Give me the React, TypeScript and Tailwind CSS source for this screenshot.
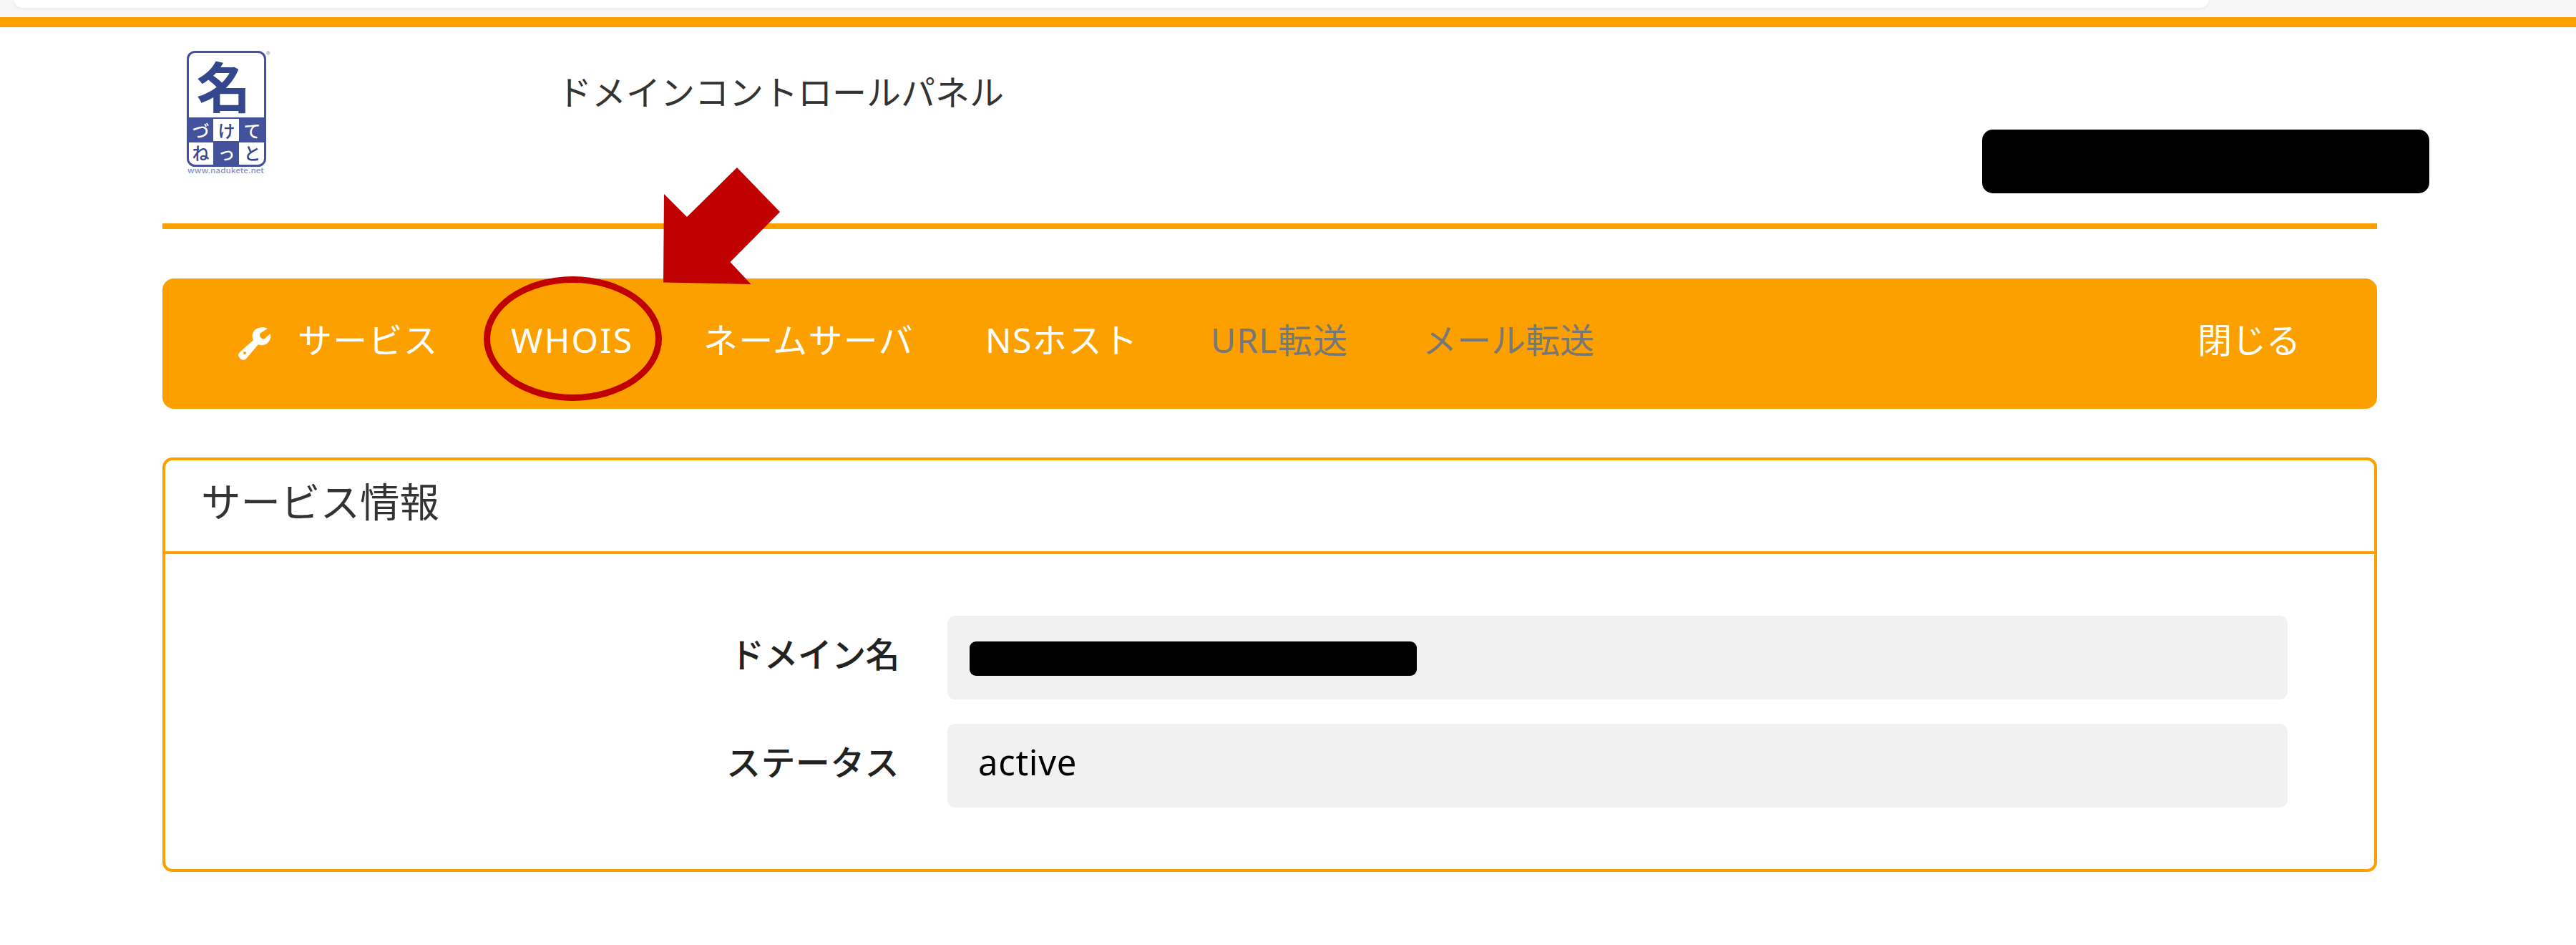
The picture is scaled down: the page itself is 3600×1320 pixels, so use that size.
import clsx from "clsx";

type navItemType = {
  label: string;
  className: string;
  disabled?: boolean;
};

type fieldRowType = {
  label: string;
  labelClass: string;
  children: React.ReactNode;
};

const navItems: navItemType[] = [
  { label: "サービス", className: "w-[298px] tracking-[1.2px]" },
  { label: "WHOIS", className: "w-[269px] tracking-[2.2px]" },
  { label: "ネームサーバ", className: "w-[394px] tracking-[1.3px]" },
  { label: "NSホスト", className: "w-[315px] tracking-[1.4px]" },
  { label: "URL転送", className: "w-[296px] tracking-[1.2px]", disabled: true },
  { label: "メール転送", className: "w-[260px]", disabled: true },
];

const logoTiles = [
  { char: "づ", x: 0, y: 0, filled: true },
  { char: "け", x: 1, y: 0, filled: false },
  { char: "て", x: 2, y: 0, filled: true },
  { char: "ね", x: 0, y: 1, filled: false },
  { char: "っ", x: 1, y: 1, filled: true },
  { char: "と", x: 2, y: 1, filled: false },
];

const Logo = () => {
  return (
    <svg
      viewBox="0 0 124 178"
      className="w-[124px] h-[178px] font-['Noto_Sans_CJK_JP',sans-serif]"
    >
      <defs>
        <clipPath id="logoFrame">
          <rect x="2" y="2" width="107" height="158" rx="10" />
        </clipPath>
      </defs>
      <text
        x="51.5"
        y="80"
        fontSize="76"
        fontWeight="700"
        textAnchor="middle"
        fill="#34478c"
      >
        名
      </text>
      <g clipPath="url(#logoFrame)">
        <rect x="0" y="93" width="112" height="4" fill="#43529a" />
        {logoTiles.map(({ char, x, y, filled }) => (
          <g key={char}>
            <rect
              x={x * 36 + 1}
              y={y * 32 + 95}
              width="37"
              height="33"
              fill={filled ? "#43529a" : "#fff"}
            />
            <text
              x={x * 36 + 19.5}
              y={y * 31 + 121}
              fontSize="24"
              fontWeight="500"
              textAnchor="middle"
              fill={filled ? "#fff" : "#34478c"}
            >
              {char}
            </text>
          </g>
        ))}
        <path d="M0 127h112" stroke="#43529a" strokeWidth="2" />
      </g>
      <rect
        x="1.5"
        y="1.5"
        width="108"
        height="159"
        rx="10"
        fill="none"
        stroke="#43529a"
        strokeWidth="3"
      />
      <text x="111" y="10" fontSize="12" fill="#8a93c0">
        ®
      </text>
      <text
        x="1"
        y="171"
        fontSize="10"
        fontWeight="500"
        textLength="107"
        lengthAdjust="spacingAndGlyphs"
        fill="#8a93c0"
      >
        www.nadukete.net
      </text>
    </svg>
  );
};

const WrenchIcon = () => {
  return (
    <svg
      viewBox="0 0 47 46"
      className="ml-[105px] mr-[37px] mt-[68px] h-[46px] w-[47px]"
      fill="currentColor"
    >
      <path
        fillRule="evenodd"
        d="M42 2C36 -1 27 0 23 5C20 9 20 14 22 18L3 35C0 38 1 42 4 44C7 47 11 46 13 43L29 24C35 27 42 24 45 18C47 14 46.500 11 45.500 9L38 16C35 17 31 15 31 11C31 9 32 8 34 7ZM10 34a2 2 0 1 0 0 4a2 2 0 1 0 0-4Z"
      />
    </svg>
  );
};

const FieldRow = ({ label, labelClass, children }: fieldRowType) => {
  return (
    <div className="flex">
      <div
        className={clsx(
          "w-[1026px] text-right font-medium text-[#222] leading-[108px]",
          labelClass
        )}
      >
        {label}
      </div>
      <div className="ml-[67px] flex h-[117px] w-[1873px] rounded-[11px] bg-[#f1f1f1]">
        {children}
      </div>
    </div>
  );
};

export default function App() {
  return (
    <div className="relative h-[1320px] w-[3600px] overflow-hidden bg-white font-['Noto_Sans','Noto_Sans_CJK_JP',sans-serif] text-[48px] text-[#333]">
      {/* bottom edge of the browser toolbar */}
      <div className="h-[24px] bg-[#f6f6f6] pl-[20px]">
        <div className="h-[11px] w-[3066px] rounded-b-[22px] bg-white shadow-[0_2px_3px_#ececec]" />
      </div>
      <div className="h-[14px] bg-[#fca000]" />

      <div className="ml-[227px] w-[3095px]">
        <header className="flex h-[282px] border-b-[8px] border-[#fca000]">
          <div className="ml-[34px] mt-[33px]">
            <Logo />
          </div>
          <h1 className="ml-[394px] mt-[61px] h-[60px] whitespace-nowrap leading-[60px]">
            ドメインコントロールパネル
          </h1>
        </header>

        <nav className="mt-[69px] flex h-[182px] rounded-[16px] bg-[#fca000] leading-[172px] text-white">
          <WrenchIcon />
          {navItems.map(({ label, className, disabled }) => (
            <a
              key={label}
              className={clsx(
                "block whitespace-nowrap",
                className,
                disabled && "text-[#777]"
              )}
            >
              {label}
            </a>
          ))}
          <a className="ml-auto mr-[107px] whitespace-nowrap">閉じる</a>
        </nav>

        <section className="mt-[68px] h-[579px] rounded-[14px] border-[4px] border-[#fca000]">
          <h2 className="h-[131px] border-b-[4px] border-[#fca000] pl-[50px] text-[55.5px] leading-[116px]">
            サービス情報
          </h2>
          <div className="flex flex-col gap-[34px] pt-[86px]">
            <FieldRow label="ドメイン名" labelClass="tracking-[-0.6px]">
              <div className="ml-[31px] mt-[36px] h-[48px] w-[625px] rounded-[9px] bg-black" />
            </FieldRow>
            <FieldRow label="ステータス" labelClass="tracking-[0.4px]">
              <span className="ml-[43px] text-[49px] leading-[107px] tracking-[0.7px] text-black">
                active
              </span>
            </FieldRow>
          </div>
        </section>
      </div>

      {/* account name is masked */}
      <div className="absolute left-[2770px] top-[181px] h-[89px] w-[625px] rounded-[15px] bg-black" />

      {/* callout around WHOIS */}
      <div className="absolute left-[676px] top-[386px] h-[174px] w-[249px] rounded-[50%] border-[9px] border-[#c00000]" />
      <svg
        viewBox="0 0 164 164"
        className="absolute left-[927px] top-[233px] size-[164px]"
      >
        <path
          d="M103 1L163 63L93.5 133L122.5 164L0 161.5L1 38L33 70Z"
          fill="#c00000"
        />
      </svg>
    </div>
  );
}
